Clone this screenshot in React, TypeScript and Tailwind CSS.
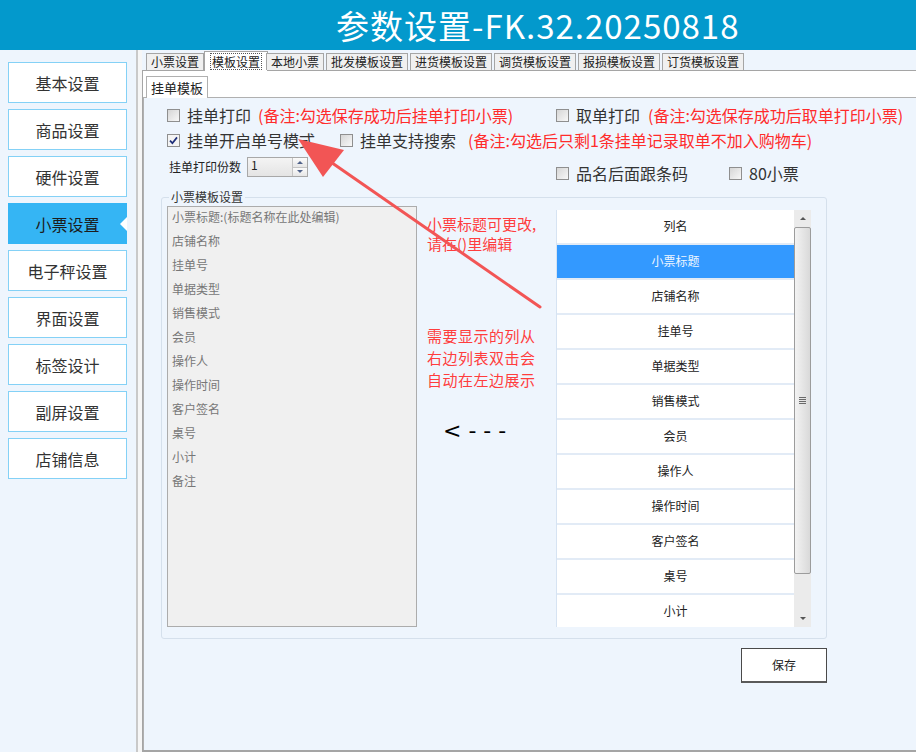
import React from "react";

function Check({ checked = false }: { checked?: boolean }) {
  return (
    <span
      className={
        "inline-flex h-[13px] w-[13px] shrink-0 items-center justify-center border border-[#8f8f8f] " +
        (checked ? "bg-[#f4f4f4]" : "bg-gradient-to-br from-[#d6d6d6] to-[#f8f8f8]")
      }
    >
      {checked && (
        <svg width="11" height="11" viewBox="0 0 11 11">
          <path d="M2 5.6 L4.4 8.2 L9 2.4" fill="none" stroke="#1e2f7a" strokeWidth="1.7" />
        </svg>
      )}
    </span>
  );
}

const sideItems = ["基本设置", "商品设置", "硬件设置", "小票设置", "电子秤设置", "界面设置", "标签设计", "副屏设置", "店铺信息"];
const tabs = ["小票设置", "模板设置", "本地小票", "批发模板设置", "进货模板设置", "调货模板设置", "报损模板设置", "订货模板设置"];
const leftItems = ["小票标题:(标题名称在此处编辑)", "店铺名称", "挂单号", "单据类型", "销售模式", "会员", "操作人", "操作时间", "客户签名", "桌号", "小计", "备注"];
const rightItems = ["列名", "小票标题", "店铺名称", "挂单号", "单据类型", "销售模式", "会员", "操作人", "操作时间", "客户签名", "桌号", "小计"];

export default function App() {
  return (
    <div className="relative flex h-[752px] w-[916px] flex-col overflow-hidden bg-[#eef5fd] font-['Noto_Sans_CJK_SC',sans-serif] text-[#222]">
      {/* Title bar */}
      <div className="h-[50px] shrink-0 bg-[#0399cc] pl-[336px] text-[33px] leading-[50px] tracking-[1px] text-white">
        参数设置-FK.32.20250818
      </div>

      <div className="flex flex-1">
        {/* Sidebar */}
        <div className="flex w-[136px] shrink-0 flex-col gap-[6px] pl-[8px] pt-[12px]">
          {sideItems.map((s) => {
            const active = s === "小票设置";
            return (
              <div
                key={s}
                className={
                  "relative flex h-[41px] w-[119px] items-center justify-center text-[16px] " +
                  (active ? "bg-[#35b5f4] text-[#1c1c1c]" : "border border-[#84d1f6] bg-white text-[#333]")
                }
              >
                {s}
                {active && (
                  <span className="absolute right-0 top-1/2 h-0 w-0 -translate-y-1/2 border-y-[7px] border-r-[7px] border-y-transparent border-r-white" />
                )}
              </div>
            );
          })}
        </div>

        {/* Separator */}
        <div className="w-[6px] shrink-0 border-l-2 border-[#c9c9c9] bg-[#f6f6f6]" />

        {/* Content */}
        <div className="flex flex-1 flex-col pt-[2px]">
          {/* Tabs */}
          <div className="relative z-10 flex h-[18px] items-end pl-[4px]">
            {tabs.map((t) => {
              const active = t === "模板设置";
              return active ? (
                <div
                  key={t}
                  className="-mx-[2px] -mb-px flex h-[20px] items-start border border-b-0 border-[#a5a5a5] bg-white px-[5px] pt-[1px] text-[12px] leading-[15px]"
                >
                  <span className="border border-dotted border-[#555] px-[1px]">{t}</span>
                </div>
              ) : (
                <div
                  key={t}
                  className="mr-[2px] h-[17px] border border-b-0 border-[#a5a5a5] bg-[#f0f0f0] px-[4px] text-[12px] leading-[16px] text-[#222]"
                >
                  {t}
                </div>
              );
            })}
          </div>

          {/* Tab panel */}
          <div className="flex flex-1 flex-col border-b-2 border-l border-t border-[#a5a5a5] bg-white pt-[5px]">
            <div className="relative z-10 flex pl-[3px]">
              <div className="-mb-px h-[22px] border border-b-0 border-[#b0b0b0] bg-white px-[4px] text-[13px] leading-[21px]">
                挂单模板
              </div>
            </div>
            <div className="flex flex-1 flex-col border-l border-t border-[#b0b0b0] bg-[#eef5fd]">
              {/* Row 1 */}
              <div className="mt-[6px] flex h-[22px] items-center pl-[23px] text-[16px]">
                <div className="flex w-[389px] items-center">
                  <Check />
                  <span className="ml-[7px] text-[#333]">挂单打印</span>
                  <span className="ml-[7px] text-[#ff2b2b]">(备注:勾选保存成功后挂单打印小票)</span>
                </div>
                <div className="flex items-center">
                  <Check />
                  <span className="ml-[7px] text-[#333]">取单打印</span>
                  <span className="ml-[8px] whitespace-nowrap text-[#ff2b2b]">(备注:勾选保存成功后取单打印小票)</span>
                </div>
              </div>
              {/* Row 2 */}
              <div className="mt-[3px] flex h-[22px] items-center whitespace-nowrap pl-[23px] text-[16px]">
                <Check checked />
                <span className="ml-[7px] text-[#333]">挂单开启单号模式</span>
                <span className="ml-[25px]">
                  <Check />
                </span>
                <span className="ml-[7px] text-[#333]">挂单支持搜索</span>
                <span className="ml-[12px] text-[#ff2b2b]">(备注:勾选后只剩1条挂单记录取单不加入购物车)</span>
              </div>
              {/* Row 3 */}
              <div className="mt-[5px] flex items-start pl-[25px]">
                <div className="flex h-[22px] w-[387px] items-center">
                  <span className="text-[12px] text-[#222]">挂单打印份数</span>
                  <div className="ml-[6px] flex h-[20px] w-[61px] border border-[#a8a8a8] bg-gradient-to-b from-[#f4f4f4] to-[#e4e4e4]">
                    <span className="flex-1 pl-[3px] text-[12px] leading-[14px]">1</span>
                    <div className="flex w-[15px] flex-col border-l border-[#c4c4c4]">
                      <div className="flex flex-1 items-center justify-center border-b border-[#c4c4c4] bg-gradient-to-b from-[#fbfbfb] to-[#e6e6e6]">
                        <span className="h-0 w-0 border-x-[3px] border-b-[3px] border-x-transparent border-b-[#50628a]" />
                      </div>
                      <div className="flex flex-1 items-center justify-center bg-gradient-to-b from-[#fbfbfb] to-[#e6e6e6]">
                        <span className="h-0 w-0 border-x-[3px] border-t-[3px] border-x-transparent border-t-[#50628a]" />
                      </div>
                    </div>
                  </div>
                </div>
                <div className="mt-[6px] flex h-[22px] items-center text-[16px]">
                  <Check />
                  <span className="ml-[7px] text-[#333]">品名后面跟条码</span>
                  <span className="ml-[41px]">
                    <Check />
                  </span>
                  <span className="ml-[7px] text-[#333]">80小票</span>
                </div>
              </div>

              {/* Group + save */}
              <div className="ml-[17px] mt-[13px] flex w-[666px] flex-col items-end">
                <div className="relative flex w-[666px] items-start rounded-[3px] border border-[#d5e0ec] pb-[11px] pl-[5px] pt-[8px]">
                  <span className="absolute -top-[9px] left-[7px] bg-[#eef5fd] px-[2px] text-[12px] leading-[16px] text-[#333]">
                    小票模板设置
                  </span>
                  {/* Left list */}
                  <div className="flex h-[421px] w-[250px] shrink-0 flex-col border border-[#acacac] bg-[#f0f0f0] pl-[4px]">
                    {leftItems.map((it) => (
                      <div key={it} className="h-[24px] text-[12px] leading-[20px] text-[#777]">
                        {it}
                      </div>
                    ))}
                  </div>
                  {/* Middle annotations */}
                  <div className="flex w-[139px] shrink-0 flex-col pl-[10px]">
                    <div className="mt-[8px] text-[15px] leading-[20px] text-[#ff3d3d]">
                      <div>小票标题可更改,</div>
                      <div>请在()里编辑</div>
                    </div>
                    <div className="mt-[71px] text-[15px] leading-[22px] text-[#ff3d3d] tracking-[0.5px]">
                      <div>需要显示的列从</div>
                      <div>右边列表双击会</div>
                      <div>自动在左边展示</div>
                    </div>
                    <div className="ml-[16px] mt-[25px] font-['DejaVu_Sans',sans-serif] text-[22px] leading-[30px] tracking-[7px] text-black">
                      &lt;---
                    </div>
                  </div>
                  {/* Right list */}
                  <div className="mt-[4px] flex h-[417px] shrink-0">
                    <div className="h-[417px] w-[238px] overflow-hidden border-l border-[#d6e3f2] bg-white">
                      {rightItems.map((it) => {
                        const sel = it === "小票标题";
                        return (
                          <div
                            key={it}
                            className={
                              "flex h-[35px] items-center justify-center border-b-2 border-[#e2ebf6] pb-[2px] text-[12px] " +
                              (sel ? "bg-[#3399ff] text-[#eef6ff]" : "bg-white text-[#222]")
                            }
                          >
                            {it}
                          </div>
                        );
                      })}
                    </div>
                    {/* Scrollbar */}
                    <div className="flex w-[17px] flex-col bg-[#ebebeb]">
                      <div className="flex h-[17px] items-center justify-center">
                        <span className="h-0 w-0 border-x-[3px] border-b-[3px] border-x-transparent border-b-[#555]" />
                      </div>
                      <div className="flex h-[347px] items-center justify-center rounded-[2px] border border-[#9c9c9c] bg-gradient-to-r from-[#f3f3f3] to-[#d9d9d9]">
                        <div className="flex flex-col gap-[1px]">
                          <span className="h-px w-[7px] bg-[#6a6a6a]" />
                          <span className="h-px w-[7px] bg-[#6a6a6a]" />
                          <span className="h-px w-[7px] bg-[#6a6a6a]" />
                          <span className="h-px w-[7px] bg-[#6a6a6a]" />
                        </div>
                      </div>
                      <div className="flex-1" />
                      <div className="flex h-[17px] items-center justify-center">
                        <span className="h-0 w-0 border-x-[3px] border-t-[3px] border-x-transparent border-t-[#555]" />
                      </div>
                    </div>
                  </div>
                </div>
                <button className="mt-[9px] h-[35px] w-[86px] border border-b-2 border-[#4a4a4a] border-b-[#5a5a5a] bg-white text-[12px] text-[#222]">
                  保存
                </button>
              </div>
            </div>
          </div>
        </div>
      </div>

      {/* Red annotation arrow */}
      <svg className="pointer-events-none absolute left-0 top-0 z-20" width="916" height="752" viewBox="0 0 916 752">
        <line x1="540" y1="307" x2="325" y2="158" stroke="#f25555" strokeWidth="3" strokeLinecap="round" />
        <polygon points="298,139 344,150 323,177" fill="#f25555" />
      </svg>
    </div>
  );
}
